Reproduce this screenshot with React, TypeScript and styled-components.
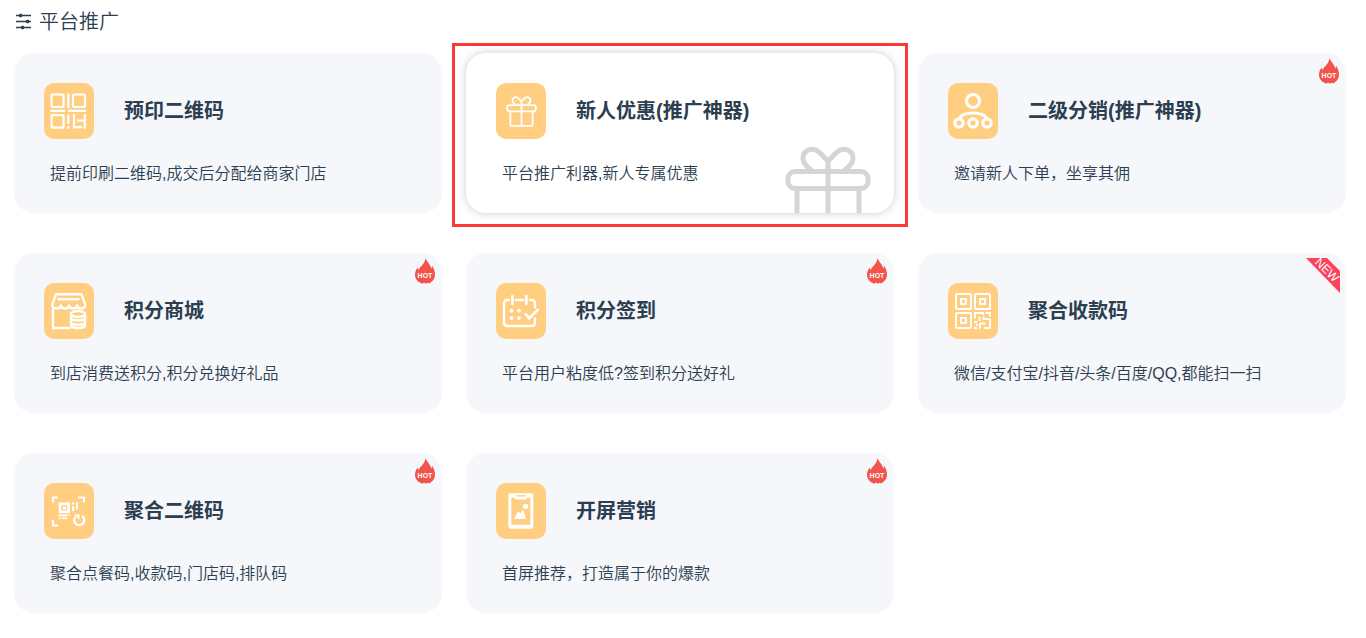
import React from "react";
import styled, { createGlobalStyle } from "styled-components";

const GlobalStyle = createGlobalStyle`
  * { box-sizing: border-box; }
  body {
    margin: 0;
    background: #fff;
    color: #2c3e50;
    font-family: "Liberation Sans", "Noto Sans CJK SC", sans-serif;
  }
`;

const Page = styled.main`
  padding: 8px 20px 24px 14px;
`;

const Header = styled.header`
  display: flex;
  align-items: center;
  gap: 7px;
  padding-left: 1px;
  margin-bottom: 17px;
`;

const PageTitle = styled.h1`
  margin: 0;
  font-size: 20px;
  line-height: 28px;
  font-weight: 350;
`;

const Grid = styled.ul`
  display: grid;
  grid-template-columns: repeat(3, minmax(0, 1fr));
  gap: 40px 24px;
  margin: 0;
  padding: 0;
  list-style: none;
`;

const Cell = styled.li<{ $framed?: boolean }>`
  position: relative;

  ${(p) =>
    p.$framed &&
    `&::after {
      content: "";
      position: absolute;
      inset: -10px -14px -14px;
      border: 3px solid #fb3838;
      pointer-events: none;
    }`}
`;

const Card = styled.a<{ $raised?: boolean }>`
  position: relative;
  display: block;
  padding: 30px 30px 27px;
  border-radius: 20px;
  overflow: hidden;
  color: inherit;
  text-decoration: none;
  background: ${(p) => (p.$raised ? "#fff" : "#f5f7fb")};
  box-shadow: ${(p) => (p.$raised ? "0 0 10px rgba(0, 0, 0, 0.2)" : "none")};
`;

const CardHead = styled.div`
  display: flex;
  align-items: center;
  gap: 30px;
`;

const Tile = styled.span`
  display: flex;
  align-items: center;
  justify-content: center;
  width: 50px;
  height: 56px;
  border-radius: 10px;
  background: #ffce81;
  color: #fff;
`;

const CardTitle = styled.h2`
  margin: 0;
  font-size: 20px;
  line-height: 28px;
  font-weight: 700;
`;

const Description = styled.p`
  margin: 23px 0 0 6px;
  font-size: 16px;
  line-height: 24px;
  font-weight: 350;
`;

const Watermark = styled.span`
  position: absolute;
  right: 23px;
  bottom: -19px;
  display: flex;
  color: #d3d5d7;
`;

const HotSlot = styled.span`
  position: absolute;
  top: 5px;
  right: 7px;
  display: flex;
`;

const NewSlot = styled.span`
  position: absolute;
  top: 5px;
  right: 6px;
  display: flex;

  svg {
    overflow: visible;
  }
`;

const SlidersIcon = () => (
  <svg width="17" height="18" viewBox="0 0 17 18" fill="none" stroke="currentColor" aria-hidden="true">
    <path d="M1 2.500H16M1 8.500H16M1 14.500H16" strokeWidth="1.4" />
    <g fill="currentColor" stroke="none">
      <rect x="4" y="0.8" width="3.2" height="3.4" rx="1.2" />
      <rect x="11" y="6.8" width="3.2" height="3.4" rx="1.2" />
      <rect x="6" y="12.8" width="3.2" height="3.4" rx="1.2" />
    </g>
  </svg>
);

const GiftIcon = ({ size }: { size: number }) => (
  <svg width={size} height={size} viewBox="0 0 86 86" fill="none" stroke="currentColor" strokeWidth="5" aria-hidden="true">
    <rect x="3" y="25.5" width="80" height="17" rx="7" />
    <path d="M12 43V79Q12 83 16 83H70Q74 83 74 79V43M43 14V83" />
    <path d="M43 15L35 7C28 0 18 4 18 12.500C18 17 21 20 27 25M43 15L51 7C58 0 68 4 68 12.500C68 17 65 20 59 25" />
  </svg>
);

const TileSvg = ({ children, w = 2 }: { children: React.ReactNode; w?: number }) => (
  <svg width="50" height="56" viewBox="0 0 50 56" fill="none" stroke="currentColor" strokeWidth={w} aria-hidden="true">
    {children}
  </svg>
);

const QrIcon = () => (
  <TileSvg w={2.2}>
    <rect x="7.600" y="11.500" width="12" height="12.500" rx="1" />
    <rect x="29" y="11.500" width="12" height="12.500" rx="1" />
    <rect x="7.600" y="32.200" width="12" height="12.500" rx="1" />
    <path d="M24.300 10.500V25M6.500 27.900H21M24 27.900H42M24.300 31.500V41M24.300 43V45.700" />
    <path d="M30 31V45.700M40.800 31V45.700M33 37.500H40.800M30 44.200H38" />
  </TileSvg>
);

const TeamIcon = () => (
  <TileSvg w={3.2}>
    <circle cx="25" cy="18" r="6.500" />
    <circle cx="11" cy="40" r="4.200" />
    <circle cx="25" cy="40" r="4.200" />
    <circle cx="39" cy="40" r="4.200" />
    <path d="M11.500 35.500C13.500 31 18 30 25 30S36.500 31 38.500 35.500" />
  </TileSvg>
);

const ShopIcon = () => (
  <TileSvg w={2.400}>
    <g strokeLinecap="round" strokeLinejoin="round">
      <path d="M12 11.300H37.500L41.300 21.500C41.300 26.500 33.800 26.500 33.200 22.500C32.600 26.500 25.600 26.500 25 22.500C24.400 26.500 17.400 26.500 16.800 22.500C16.200 26.500 8.200 26.500 8.200 21.500Z" />
      <path d="M14.500 16.300H34.500M9 27V45H25.500" />
      <ellipse cx="34" cy="31" rx="7" ry="3" />
      <path d="M27 31V42C27 43.700 30 45 34 45S41 43.700 41 42V31M27.300 35.500C28.500 38 39.500 38 40.700 35.500M27.300 39.800C28.500 42.300 39.500 42.300 40.700 39.800" />
    </g>
  </TileSvg>
);

const CalendarIcon = () => (
  <TileSvg w={2.400}>
    <path
      d="M13 17H11.500Q8 17 8 20.500V39.500Q8 43 11.500 43H35.500Q39 43 39 39.500V35.500M20 17H27M34 17H35.500Q39 17 39 20.500V24.500"
      strokeLinecap="round"
    />
    <path d="M16.500 13V21M30.300 13V21M29.800 31.500L33.300 35.200L41.800 26.800" strokeWidth="2.700" strokeLinecap="round" />
    <g fill="currentColor" stroke="none">
      <circle cx="15.500" cy="27.700" r="2" />
      <circle cx="23" cy="27.700" r="2" />
      <circle cx="15.500" cy="35" r="2" />
      <circle cx="23" cy="35" r="2" />
    </g>
  </TileSvg>
);

const PayCodeIcon = () => (
  <TileSvg w={1.900}>
    <rect x="8" y="11" width="15" height="15" rx="1" />
    <rect x="27" y="11" width="15" height="15" rx="1" />
    <rect x="8" y="30" width="15" height="15" rx="1" />
    <rect x="13" y="16" width="5" height="5" />
    <rect x="32" y="16" width="5" height="5" />
    <rect x="13" y="35" width="5" height="5" />
    <path d="M26 30H35V32M27 30V35.500M31.500 34V38M37.500 30H42V33.500M42 36V45.700M42 36H35.500V33.500M26 39H29M29 41V43M26 45H29M32 45.700V40.500H37.500M36 45H42" />
  </TileSvg>
);

const ScanIcon = () => (
  <TileSvg w={2.100}>
    <path d="M9 19.500V14.500H14M34 14.500H40V19.500M9 37V42.500H14" />
    <rect x="16" y="20.800" width="8.500" height="8" strokeWidth="2.800" />
    <g fill="currentColor" stroke="none">
      <rect x="19" y="23.500" width="2.800" height="2.800" />
      <rect x="28" y="19.500" width="2.300" height="2" />
      <rect x="28" y="23" width="2.300" height="5" />
      <rect x="32" y="19.500" width="2" height="7" />
      <rect x="14.500" y="31.500" width="9" height="1.800" />
      <rect x="24.500" y="31" width="1.500" height="1.500" />
      <rect x="14.500" y="34.500" width="2" height="1.600" />
      <rect x="18" y="34.500" width="5.500" height="1.600" />
      <path d="M30 31.300H35.500V36.800Z" />
    </g>
    <path d="M38 33A5 5 0 1 1 31.800 33.500" strokeWidth="2.300" />
  </TileSvg>
);

const PhoneIcon = () => (
  <TileSvg>
    <path
      fill="currentColor"
      stroke="none"
      fillRule="evenodd"
      d="M14.800 10.300H34.800Q37.300 10.300 37.300 12.800V43.200Q37.300 45.700 34.800 45.700H14.800Q12.300 45.700 12.300 43.200V12.800Q12.300 10.300 14.800 10.300ZM15.300 14.800V41.700H34.300V14.800H31V15.600Q30.500 16.400 29.500 16.400H20.200Q19 16.400 18.800 15.600V14.800ZM20 12.300V13.400H30V12.300Z"
    />
    <g fill="currentColor" stroke="none">
      <path d="M18 36L22 28.500L24.500 30.500L27 26L30 36Z" />
      <circle cx="29.700" cy="23.300" r="2.600" />
    </g>
  </TileSvg>
);

const HotBadge = () => (
  <HotSlot>
    <svg width="20" height="26" viewBox="0 0 20 26" role="img" aria-label="HOT">
      <path
        fill="#f2544c"
        d="M10.500 0C11.500 3.500 15.500 6.500 16.200 10.500C16.800 9.800 17 8.800 17 7.800C19 10.500 20 13.500 20 16.500C20 20.500 17.500 24 13.800 25.500C13.300 24.600 12.800 24.600 12.200 25C11.300 26 10.500 25.800 9.800 25.100C9 24.400 8.300 25.300 7.300 25.700C3 24.500 0 21 0 16.800C0 13.500 1.200 11.500 2.800 9.800C3 10.800 3.300 11.500 4 12C4.200 8.500 10 6.500 10.500 0Z"
      />
      <text x="10" y="19.500" textAnchor="middle" fontFamily="Liberation Sans, sans-serif" fontSize="7" fontWeight="700" fill="#fff">
        HOT
      </text>
    </svg>
  </HotSlot>
);

const NewBadge = () => (
  <NewSlot>
    <svg width="34" height="35" viewBox="0 0 34 35" role="img" aria-label="NEW">
      <path fill="#fd4259" d="M0 0H21L34 13V35Z" />
      <text
        transform="translate(21 12) rotate(45)"
        y="4"
        textAnchor="middle"
        fontFamily="Liberation Sans, sans-serif"
        fontSize="12"
        fill="#fff"
      >
        NEW
      </text>
    </svg>
  </NewSlot>
);

type Feature = {
  title: string;
  text: string;
  icon: React.ReactNode;
  badge?: "hot" | "new";
  active?: boolean;
};

const features: Feature[] = [
  { title: "预印二维码", text: "提前印刷二维码,成交后分配给商家门店", icon: <QrIcon /> },
  { title: "新人优惠(推广神器)", text: "平台推广利器,新人专属优惠", icon: <GiftIcon size={31} />, active: true },
  { title: "二级分销(推广神器)", text: "邀请新人下单，坐享其佣", icon: <TeamIcon />, badge: "hot" },
  { title: "积分商城", text: "到店消费送积分,积分兑换好礼品", icon: <ShopIcon />, badge: "hot" },
  { title: "积分签到", text: "平台用户粘度低?签到积分送好礼", icon: <CalendarIcon />, badge: "hot" },
  { title: "聚合收款码", text: "微信/支付宝/抖音/头条/百度/QQ,都能扫一扫", icon: <PayCodeIcon />, badge: "new" },
  { title: "聚合二维码", text: "聚合点餐码,收款码,门店码,排队码", icon: <ScanIcon />, badge: "hot" },
  { title: "开屏营销", text: "首屏推荐，打造属于你的爆款", icon: <PhoneIcon />, badge: "hot" },
];

export default function App() {
  return (
    <Page lang="zh-CN">
      <GlobalStyle />
      <Header>
        <SlidersIcon />
        <PageTitle>平台推广</PageTitle>
      </Header>
      <Grid>
        {features.map((f) => (
          <Cell key={f.title} $framed={f.active}>
            <Card href="#" $raised={f.active}>
              {f.active && (
                <Watermark>
                  <GiftIcon size={86} />
                </Watermark>
              )}
              <CardHead>
                <Tile>{f.icon}</Tile>
                <CardTitle>{f.title}</CardTitle>
              </CardHead>
              <Description>{f.text}</Description>
              {f.badge === "hot" && <HotBadge />}
              {f.badge === "new" && <NewBadge />}
            </Card>
          </Cell>
        ))}
      </Grid>
    </Page>
  );
}
